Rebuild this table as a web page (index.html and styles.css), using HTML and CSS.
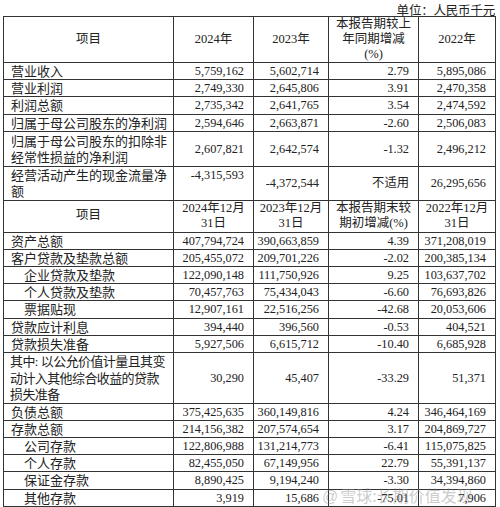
FILE: index.html
```html
<!DOCTYPE html>
<html lang="zh">
<head>
<meta charset="utf-8">
<link rel="stylesheet" href="styles.css">
</head>
<body>
<div class="page">
  <div class="unit">单位：人民币千元</div>
  <table class="fin">
    <colgroup>
      <col class="c1"><col class="c2"><col class="c3"><col class="c4"><col class="c5">
    </colgroup>
    <tr class="h1">
      <td class="hd">项目</td>
      <td class="hd">2024年</td>
      <td class="hd">2023年</td>
      <td class="hd">本报告期较上<br>年同期增减<br>(%)</td>
      <td class="hd">2022年</td>
    </tr>
    <tr><td class="lb">营业收入</td><td class="num">5,759,162</td><td class="num">5,602,714</td><td class="num">2.79</td><td class="num">5,895,086</td></tr>
    <tr><td class="lb">营业利润</td><td class="num">2,749,330</td><td class="num">2,645,806</td><td class="num">3.91</td><td class="num">2,470,358</td></tr>
    <tr><td class="lb">利润总额</td><td class="num">2,735,342</td><td class="num">2,641,765</td><td class="num">3.54</td><td class="num">2,474,592</td></tr>
    <tr><td class="lb">归属于母公司股东的净利润</td><td class="num">2,594,646</td><td class="num">2,663,871</td><td class="num">-2.60</td><td class="num">2,506,083</td></tr>
    <tr class="tall"><td class="lb">归属于母公司股东的扣除非<br>经常性损益的净利润</td><td class="num">2,607,821</td><td class="num">2,642,574</td><td class="num">-1.32</td><td class="num">2,496,212</td></tr>
    <tr><td class="lb">经营活动产生的现金流量净<br>额</td><td class="num top">-4,315,593</td><td class="num">-4,372,544</td><td class="num">不适用</td><td class="num">26,295,656</td></tr>
    <tr class="h2">
      <td class="hd">项目</td>
      <td class="hd">2024年12月<br>31日</td>
      <td class="hd">2023年12月<br>31日</td>
      <td class="hd">本报告期末较<br>期初增减(%)</td>
      <td class="hd">2022年12月<br>31日</td>
    </tr>
    <tr><td class="lb">资产总额</td><td class="num">407,794,724</td><td class="num">390,663,859</td><td class="num">4.39</td><td class="num">371,208,019</td></tr>
    <tr><td class="lb">客户贷款及垫款总额</td><td class="num">205,455,072</td><td class="num">209,701,226</td><td class="num">-2.02</td><td class="num">200,385,134</td></tr>
    <tr><td class="lb ind">企业贷款及垫款</td><td class="num">122,090,148</td><td class="num">111,750,926</td><td class="num">9.25</td><td class="num">103,637,702</td></tr>
    <tr><td class="lb ind">个人贷款及垫款</td><td class="num">70,457,763</td><td class="num">75,434,043</td><td class="num">-6.60</td><td class="num">76,693,826</td></tr>
    <tr><td class="lb ind">票据贴现</td><td class="num">12,907,161</td><td class="num">22,516,256</td><td class="num">-42.68</td><td class="num">20,053,606</td></tr>
    <tr><td class="lb">贷款应计利息</td><td class="num">394,440</td><td class="num">396,560</td><td class="num">-0.53</td><td class="num">404,521</td></tr>
    <tr><td class="lb">贷款损失准备</td><td class="num">5,927,506</td><td class="num">6,615,712</td><td class="num">-10.40</td><td class="num">6,685,928</td></tr>
    <tr><td class="lb tight">其中<span class="colon">:</span>以公允价值计量且其变<br>动计入其他综合收益的贷款<br>损失准备</td><td class="num">30,290</td><td class="num">45,407</td><td class="num">-33.29</td><td class="num">51,371</td></tr>
    <tr><td class="lb">负债总额</td><td class="num">375,425,635</td><td class="num">360,149,816</td><td class="num">4.24</td><td class="num">346,464,169</td></tr>
    <tr><td class="lb">存款总额</td><td class="num">214,156,382</td><td class="num">207,574,654</td><td class="num">3.17</td><td class="num">204,869,727</td></tr>
    <tr><td class="lb ind">公司存款</td><td class="num">122,806,988</td><td class="num">131,214,773</td><td class="num">-6.41</td><td class="num">115,075,825</td></tr>
    <tr><td class="lb ind">个人存款</td><td class="num">82,455,050</td><td class="num">67,149,956</td><td class="num">22.79</td><td class="num">55,391,137</td></tr>
    <tr><td class="lb ind">保证金存款</td><td class="num">8,890,425</td><td class="num">9,194,240</td><td class="num">-3.30</td><td class="num">34,394,860</td></tr>
    <tr><td class="lb ind">其他存款</td><td class="num">3,919</td><td class="num">15,686</td><td class="num">-75.01</td><td class="num">7,906</td></tr>
  </table>
  <div class="watermark"><span class="wm-at">@</span>雪球:长期价值发现</div>
</div>
</body>
</html>
```

FILE: styles.css
```css
html, body {
  margin: 0;
  padding: 0;
  background: #ffffff;
}

.page {
  position: relative;
  width: 500px;
  height: 507px;
  overflow: hidden;
  padding: 0 0 0 3px;
  box-sizing: border-box;
  font-family: "Liberation Serif", "Noto Sans CJK SC", serif;
  color: #222222;
}

.unit {
  width: 492px;
  height: 13px;
  padding-top: 3px;
  text-align: right;
  font-size: 12.5px;
  line-height: 13px;
  font-family: "Noto Sans CJK SC", sans-serif;
  letter-spacing: -0.2px;
}

.fin {
  border-collapse: collapse;
  table-layout: fixed;
  width: 492px;
}

.c1 { width: 170px; }
.c2 { width: 80px; }
.c3 { width: 75px; }
.c4 { width: 90px; }
.c5 { width: 77px; }

.fin td {
  border: 1.5px solid #333333;
  padding: 0;
  font-size: 12.3px;
  line-height: 16.2px;
  vertical-align: middle;
  white-space: nowrap;
  overflow: hidden;
}

.fin td.lb {
  font-family: "Noto Sans CJK SC", sans-serif;
  font-size: 13px;
  padding-left: 7px;
  text-align: left;
}

.fin td.tight {
  letter-spacing: -0.6px;
  padding-left: 6px;
}

.colon {
  font-family: "Liberation Serif", serif;
  margin-right: 3px;
}

.fin td.ind {
  padding-left: 20px;
}

.fin td.num {
  text-align: right;
  padding-right: 9px;
}

.fin td.top {
  vertical-align: top;
}

.fin td.hd {
  text-align: center;
  font-size: 12.5px;
}

.h1 td {
  line-height: 15px;
}

.h2 td {
  line-height: 15.5px;
}

.tall td {
  padding-top: 1px;
  padding-bottom: 1px;
}

.watermark {
  position: absolute;
  left: 322px;
  top: 486px;
  font-size: 16px;
  line-height: 18px;
  color: rgba(140, 140, 140, 0.45);
  font-family: "Noto Sans CJK SC", sans-serif;
  white-space: nowrap;
}

.wm-at {
  font-family: "Liberation Sans", sans-serif;
  margin-right: 2px;
}
```
